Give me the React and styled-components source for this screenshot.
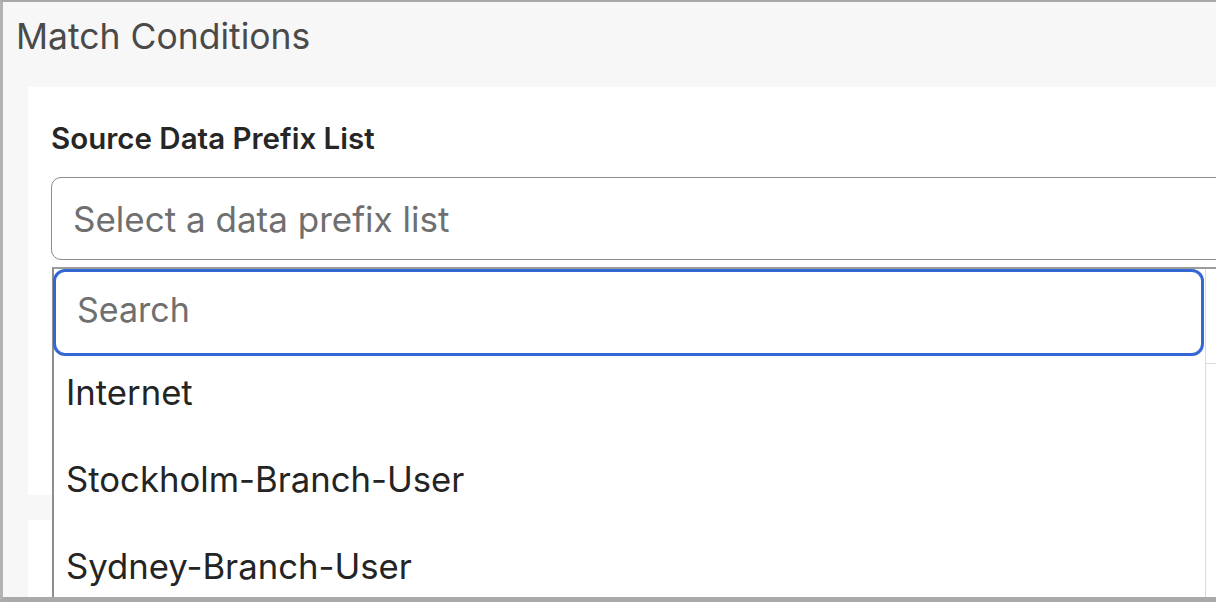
import styled, { createGlobalStyle } from 'styled-components';

const GlobalStyle = createGlobalStyle`
  html, body {
    margin: 0;
    padding: 0;
    overflow: hidden;
    background: #ffffff;
  }
  * {
    box-sizing: border-box;
  }
`;

const Frame = styled.div`
  position: relative;
  width: 1216px;
  height: 602px;
  overflow: hidden;
  background: #f7f7f7;
  border-left: 3px solid #b2b2b2;
  border-top: 2px solid #a9a9a9;
  border-bottom: 5px solid #a9a9a9;
  font-family: Inter, "Noto Sans", sans-serif;
`;

const Title = styled.h2`
  margin: 0;
  height: 85px;
  padding: 13px 0 0 13px;
  font-size: 35.5px;
  line-height: 44px;
  font-weight: 400;
  color: #4a4a4a;
`;

const Body = styled.div`
  padding-left: 25px;
  display: flex;
  flex-direction: column;
  gap: 25px;
`;

const Panel = styled.section`
  background: #ffffff;
  height: ${(p) => p.h}px;
  flex-shrink: 0;
  padding: 33px 0 0 23px;
`;

const Label = styled.div`
  font-size: 29.5px;
  line-height: 36px;
  font-weight: 600;
  color: #262626;
  margin-bottom: 21px;
`;

const Select = styled.div`
  height: 83px;
  margin-right: -40px;
  border: 1.5px solid #8c8c8c;
  border-radius: 10px;
  display: flex;
  align-items: center;
  padding-left: 21px;
  font-size: 35px;
  color: #6f6f6f;
`;

const Dropdown = styled.div`
  position: absolute;
  left: 49px;
  top: 265px;
  right: -20px;
  bottom: 0;
  display: flex;
  background: #ffffff;
  border-top: 2px solid #9c9c9c;
  border-left: 2px solid #8e8e8e;
`;

const ListArea = styled.div`
  width: 1151px;
  display: flex;
  flex-direction: column;
`;

const SearchBox = styled.div`
  height: 87px;
  flex-shrink: 0;
  margin: 0 1px 0 -1px;
  border: 3px solid #3368d4;
  border-radius: 12px;
  display: flex;
  align-items: center;
  padding: 0 0 7px 21px;
  font-size: 34px;
  color: #6f6f6f;
`;

const Option = styled.div`
  height: 87px;
  flex-shrink: 0;
  display: flex;
  align-items: center;
  padding: 0 0 15px 12px;
  font-size: 34.7px;
  color: #242424;
`;

const ScrollTrack = styled.div`
  flex: 1;
  border-left: 1.5px solid #dcdcdc;
`;

const ScrollThumb = styled.div`
  height: 95px;
  border-bottom: 1.5px solid #dcdcdc;
`;

const options = ['Internet', 'Stockholm-Branch-User', 'Sydney-Branch-User'];

export default function App() {
  return (
    <>
      <GlobalStyle />
      <Frame>
        <Title>Match Conditions</Title>
        <Body>
          <Panel h={408}>
            <Label>Source Data Prefix List</Label>
            <Select>Select a data prefix list</Select>
          </Panel>
          <Panel h={200} />
        </Body>
        <Dropdown>
          <ListArea>
            <SearchBox>Search</SearchBox>
            {options.map((o) => (
              <Option key={o}>{o}</Option>
            ))}
          </ListArea>
          <ScrollTrack>
            <ScrollThumb />
          </ScrollTrack>
        </Dropdown>
      </Frame>
    </>
  );
}
